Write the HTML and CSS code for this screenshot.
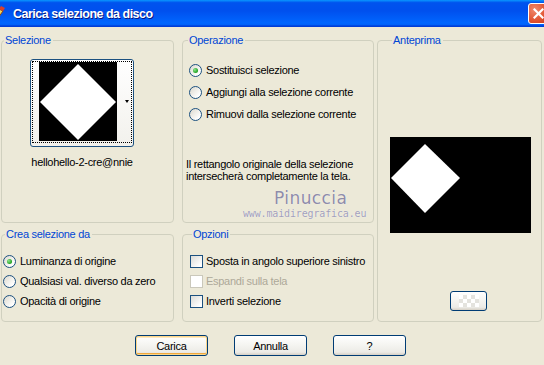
FILE: index.html
```html
<!DOCTYPE html>
<html lang="it">
<head>
  <meta charset="UTF-8" />
  <title>Carica selezione da disco</title>
  <link rel="stylesheet" href="styles.css">
</head>
<body>
  <div class="window">
    <div class="titlebar">
      <svg class="app-icon" width="16" height="16" viewBox="0 0 16 16">
        <path d="M2 14 L9 3 L13 5 L6 15 Z" fill="#f4d35a" stroke="#8a4b12" stroke-width="1"/>
        <path d="M9 3 L11 0 L15 2 L13 5 Z" fill="#d9402b"/>
        <path d="M2 14 L4 10 L6 15 Z" fill="#ffffff"/>
      </svg>
      <span class="title">Carica selezione da disco</span>
      <span class="close">
        <svg width="11" height="11" viewBox="0 0 11 11">
          <path d="M1.5 1.5 L9.5 9.5 M9.5 1.5 L1.5 9.5" stroke="#fff" stroke-width="2.2" stroke-linecap="square"/>
        </svg>
      </span>
    </div>

    <div class="content">
      <fieldset class="group g-sel">
        <legend>Selezione</legend>
        <div class="thumb">
          <div class="thumb-focus">
            <svg class="thumb-img" width="78" height="79" viewBox="0 0 78 79">
              <rect width="78" height="79" fill="#000"/>
              <polygon points="39,2 77,40 39,78 1,40" fill="#fff"/>
            </svg>
            <span class="thumb-arrow"></span>
          </div>
        </div>
        <div class="thumb-name">hellohello-2-cre@nnie</div>
      </fieldset>

      <fieldset class="group g-op">
        <legend>Operazione</legend>
        <div class="options">
          <label class="opt"><span class="radio checked"></span>Sostituisci selezione</label>
          <label class="opt"><span class="radio"></span>Aggiungi alla selezione corrente</label>
          <label class="opt"><span class="radio"></span>Rimuovi dalla selezione corrente</label>
        </div>
        <p class="note">Il rettangolo originale della selezione<br>intersecherà completamente la tela.</p>
        <div class="watermark">
          <span class="wm-name">Pinuccia</span>
          <span class="wm-site">www.maidiregrafica.eu</span>
        </div>
      </fieldset>

      <fieldset class="group g-prev">
        <legend>Anteprima</legend>
        <svg class="preview" width="141" height="96" viewBox="0 0 141 96">
          <rect width="141" height="96" fill="#000"/>
          <polygon points="35,7 70,41 35,76 1,41" fill="#fff"/>
        </svg>
        <span class="btn small"><span class="checker"></span></span>
      </fieldset>

      <fieldset class="group g-crea">
        <legend>Crea selezione da</legend>
        <div class="options tight">
          <label class="opt"><span class="radio checked"></span>Luminanza di origine</label>
          <label class="opt"><span class="radio"></span>Qualsiasi val. diverso da zero</label>
          <label class="opt"><span class="radio"></span>Opacità di origine</label>
        </div>
      </fieldset>

      <fieldset class="group g-opz">
        <legend>Opzioni</legend>
        <div class="options tight">
          <label class="opt"><span class="check"></span>Sposta in angolo superiore sinistro</label>
          <label class="opt disabled"><span class="check"></span>Espandi sulla tela</label>
          <label class="opt"><span class="check"></span>Inverti selezione</label>
        </div>
      </fieldset>
    </div>

    <div class="buttons">
      <span class="btn default">Carica</span>
      <span class="btn">Annulla</span>
      <span class="btn">?</span>
    </div>
  </div>
</body>
</html>
```

FILE: styles.css
```css
body {
  margin: 0;
  background: #ece9d8;
}
.window {
  width: 544px;
  height: 365px;
  background: #ece9d8;
  font-family: 'Liberation Sans', Arial, sans-serif;
  font-size: 11px;
  letter-spacing: -0.28px;
  color: #000;
  overflow: hidden;
}
.titlebar {
  height: 27px;
  display: flex;
  align-items: center;
  background: linear-gradient(#0997ff 0, #0053ee 10%, #0050ee 40%, #0066ff 85%, #0061f8 92%, #003dd7 96%, #003dd7 100%);
  color: #fff;
}
.app-icon {
  margin-left: -10px;
  margin-right: 7px;
}
.title {
  font-weight: bold;
  font-size: 12.5px;
  letter-spacing: -0.5px;
  text-shadow: 1px 1px #0a1883;
  flex: 1;
}
.close {
  width: 19px;
  height: 19px;
  margin-right: -5px;
  border: 1px solid #fff;
  border-radius: 3px;
  background: radial-gradient(circle at 30% 30%, #f08a6c, #e0522f 60%, #c3391a);
  display: flex;
  align-items: center;
  justify-content: center;
}
.content {
  display: grid;
  grid-template-columns: 173px 8px 192px 3px 165px;
  grid-template-rows: 189px 94px;
  row-gap: 5px;
  padding: 7px 0 0 1px;
}
.group {
  margin: 0;
  padding: 0;
  min-width: 0;
  border: 1px solid #d0d0bf;
  border-radius: 4px;
  position: relative;
}
.group legend {
  color: #0046d5;
  line-height: 13px;
  padding: 0 2px 0 1px;
  margin-left: 2px;
}
.g-sel {
  grid-column: 1;
  grid-row: 1;
  display: flex;
  flex-direction: column;
  align-items: center;
  padding: 12px 11px 0 0;
}
.g-op {
  grid-column: 3;
  grid-row: 1;
  padding: 17px 0 0 3px;
}
.g-prev {
  grid-column: 5;
  grid-row: 1 / span 2;
  padding: 90px 0 0 12px;
}
.g-crea {
  grid-column: 1;
  grid-row: 2;
  padding: 14px 0 0 1px;
}
.g-opz {
  grid-column: 3;
  grid-row: 2;
  padding: 14px 0 0 7px;
}

/* selection thumbnail */
.thumb {
  width: 100px;
  height: 84px;
  border: 1px solid #1c5180;
  border-radius: 3px;
  background: linear-gradient(#fff, #f2f1ec);
  padding: 1px;
  box-sizing: content-box;
}
.thumb-focus {
  height: 82px;
  border: 1px dotted #000;
  box-sizing: border-box;
  display: flex;
  align-items: flex-start;
  padding: 0 0 0 6px;
}
.thumb-img {
  display: block;
}
.thumb-arrow {
  margin: 38px 0 0 8px;
  width: 0;
  height: 0;
  border-left: 2.5px solid transparent;
  border-right: 2.5px solid transparent;
  border-top: 3px solid #000;
}
.thumb-name {
  margin-top: 9px;
  line-height: 12px;
}

/* radios / checks */
.options {
  display: flex;
  flex-direction: column;
  gap: 9px;
  padding-left: 3px;
}
.options.tight {
  gap: 7px;
  padding-left: 0;
}
.opt {
  display: flex;
  align-items: center;
  gap: 4px;
  line-height: 13px;
  height: 13px;
  white-space: nowrap;
}
.radio {
  width: 11px;
  height: 11px;
  border: 1px solid #1c5180;
  border-radius: 50%;
  background: linear-gradient(135deg, #dcd9ce, #fff 80%);
  display: flex;
  align-items: center;
  justify-content: center;
  flex: none;
}
.radio.checked::after {
  content: "";
  width: 5px;
  height: 5px;
  border-radius: 50%;
  background: radial-gradient(circle at 35% 35%, #8be58b, #21a121 70%);
}
.check {
  width: 11px;
  height: 11px;
  border: 1px solid #1c5180;
  background: linear-gradient(135deg, #dcdcd7, #fff 85%);
  flex: none;
}
.g-opz .opt {
  gap: 3px;
}
.opt.disabled {
  color: #aca899;
}
.opt.disabled .check {
  border-color: #cac8bb;
  background: #fff;
}
.note {
  margin: 37px 0 0 0;
  line-height: 12px;
}

/* watermark */
.watermark {
  position: absolute;
  left: 60px;
  top: 142px;
  display: flex;
  flex-direction: column;
  align-items: flex-end;
  color: #8f8ca9;
  text-shadow: 0 0 1px #fff;
}
.wm-name {
  font-family: 'DejaVu Sans', sans-serif;
  font-size: 17px;
  line-height: 19px;
  letter-spacing: 0.4px;
  margin-right: 19px;
}
.wm-site {
  font-family: 'DejaVu Sans Mono', monospace;
  font-size: 10px;
  line-height: 11px;
  letter-spacing: -0.15px;
  color: #a29fba;
}

/* preview */
.preview {
  display: block;
}

/* buttons */
.btn {
  display: flex;
  align-items: center;
  justify-content: center;
  width: 71px;
  height: 19px;
  border: 1px solid #003c74;
  border-radius: 3px;
  background: linear-gradient(#fff, #f4f4f0 50%, #ecebe6 85%, #d6d0c5);
}
.btn.default {
  box-shadow: inset 0 0 0 1px #fbd68a, inset 0 -2px 0 0 #f0a83d, inset 0 2px 0 0 #ffe9c0;
}
.btn.small {
  width: 35px;
  height: 18px;
  margin: 58px 0 0 60px;
}
.checker {
  width: 20px;
  height: 12px;
  background-color: #fff;
  background-image: linear-gradient(45deg, #e4e3de 25%, transparent 25%, transparent 75%, #e4e3de 75%),
    linear-gradient(45deg, #e4e3de 25%, transparent 25%, transparent 75%, #e4e3de 75%);
  background-size: 8px 8px;
  background-position: 0 0, 4px 4px;
}
.buttons {
  display: flex;
  gap: 26px;
  margin-top: 13px;
  padding-left: 135px;
}
```
